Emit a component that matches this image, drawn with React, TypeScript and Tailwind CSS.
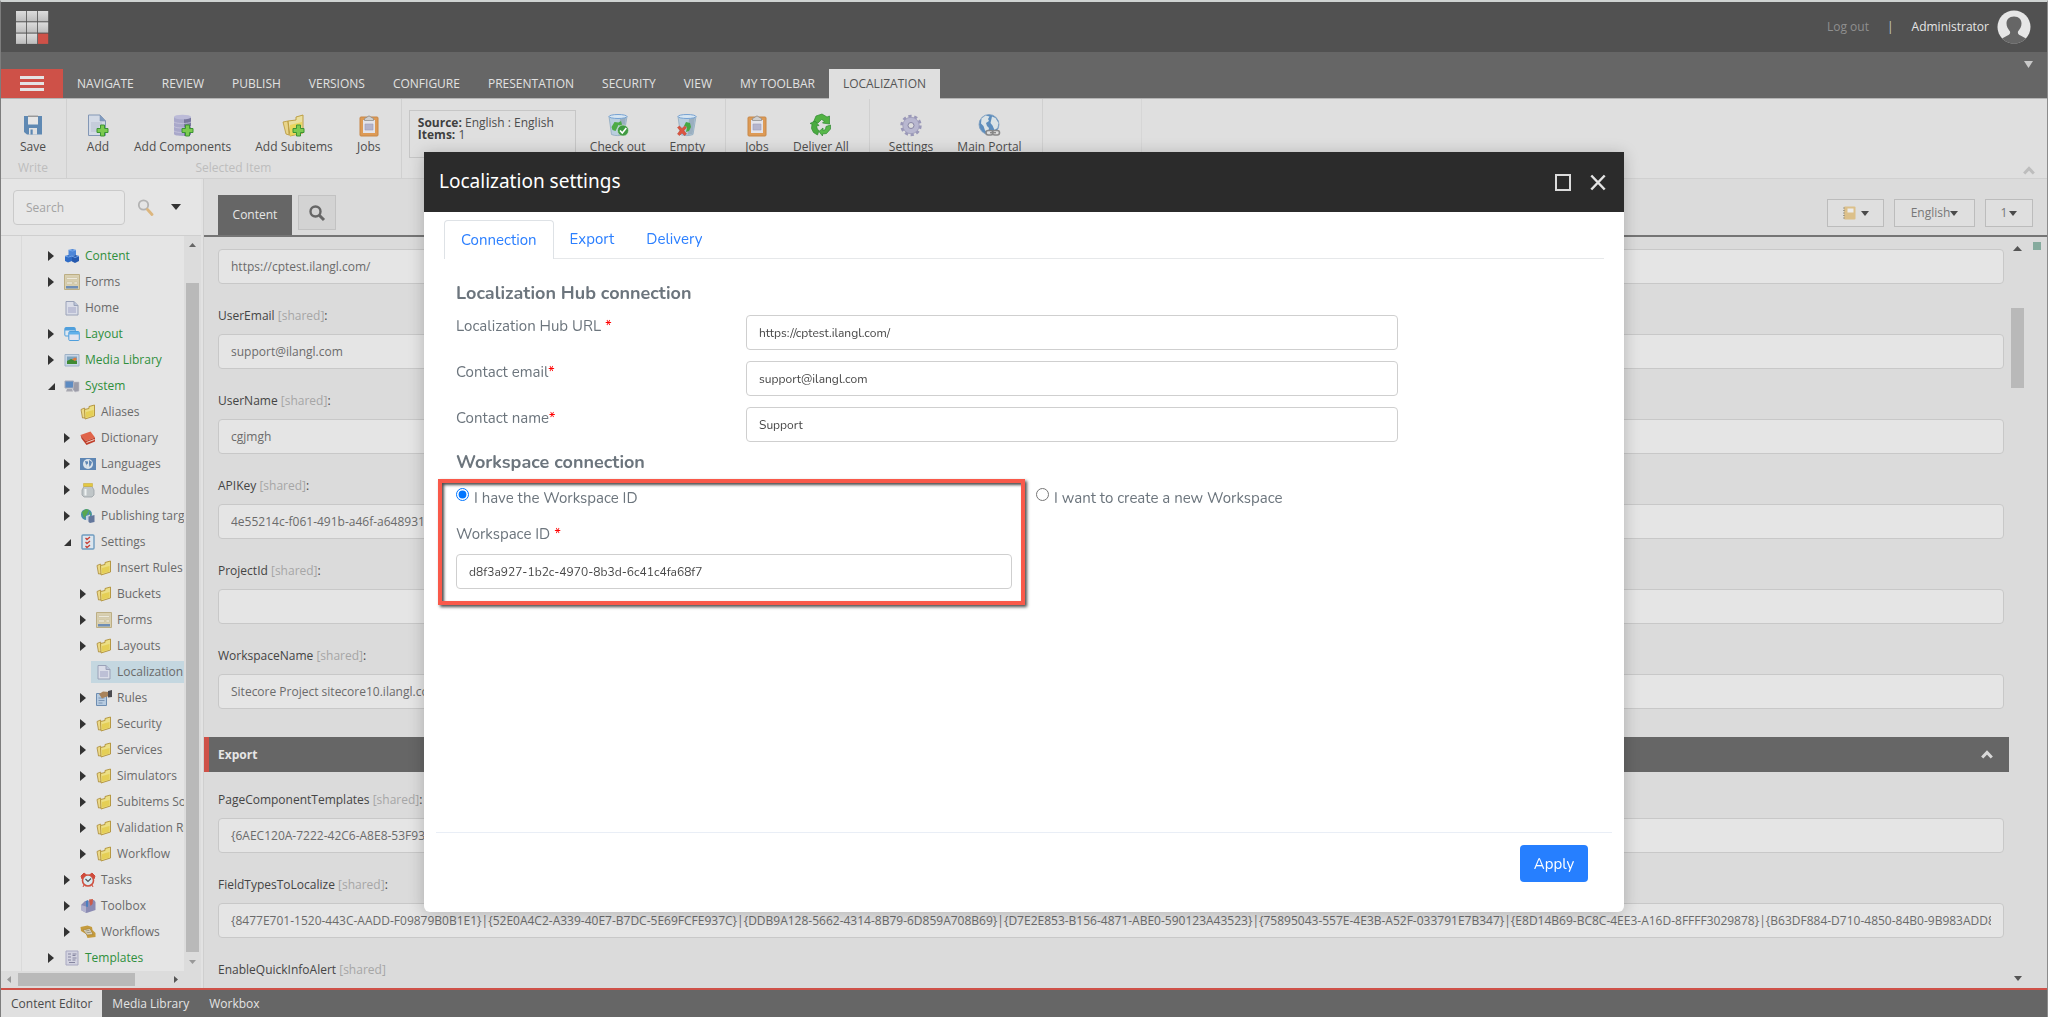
import { useId, useState } from 'react';
import type { ReactNode } from 'react';

/* ---------- icons ---------- */

function Svg({ children, box = 16, className = 'w-4 h-4' }: { children: ReactNode; box?: number; className?: string }) {
  return (
    <svg viewBox={`0 0 ${box} ${box}`} className={`${className} shrink-0`} fill="none" aria-hidden="true">
      {children}
    </svg>
  );
}

const Plus = () => (
  <path d="M14.500 12h4v3.500h3.500v4h-3.500v3.500h-4v-3.500h-3.500v-4h3.500z" fill="#7ccb4f" stroke="#3c9434" strokeWidth="1" />
);

const BigClipboard = () => (
  <Svg box={24} className="w-6 h-6">
    <rect x="3" y="4" width="18" height="19" rx="1" fill="#dd9a55" stroke="#c78748" />
    <path d="M6 7h12v13H6z" fill="#e3e3ea" />
    <path d="M8 11h8v6H8z" fill="#b4b4cc" stroke="#9d9db8" strokeWidth=".6" />
    <path d="M7.500 7.500V5.500l3-1.500a1.600 1.600 0 0 1 3 0l3 1.500v2z" fill="#cfcfcf" stroke="#8f8f8f" strokeWidth=".8" />
  </Svg>
);

const Bin = () => (
  <>
    <path d="M3 3.500 5.500 21.500c3 1.500 9.500 1.500 12.500 0L21 3.500z" fill="#b9cede" stroke="#8fa9bf" strokeWidth=".8" />
    <path d="M14 6l6-2-2.500 17-5 1z" fill="#8ea2b3" opacity=".7" />
    <ellipse cx="12" cy="3.500" rx="9" ry="2" fill="#d7e6f2" stroke="#6b9bd0" strokeWidth=".9" />
  </>
);

const bigIcons = {
  save: (
    <Svg box={24} className="w-6 h-6">
      <path d="M3 3h18v18.500H6L3 19z" fill="#5f89b3" />
      <path d="M7 3h10v8.500H7z" fill="#e6e6e6" />
      <path d="M7 3.200h10" stroke="#777" strokeWidth="1" />
      <path d="M8 15h8v6.500H8z" fill="#e1e1e1" />
      <path d="M9.500 16.500h2.200v5H9.500z" fill="#5f89b3" />
    </Svg>
  ),
  add: (
    <Svg box={24} className="w-6 h-6">
      <path d="M2.500 2h11.500l5.500 6v14.500h-17z" fill="#d3dae6" stroke="#8397b5" />
      <path d="M14 2v6h5.500z" fill="#7f9bc0" stroke="#8397b5" strokeWidth=".6" />
      <path d="M5 10h11M5 12h11M5 14h8M5 16h8M5 18h6" stroke="#b7bfd0" />
      <Plus />
    </Svg>
  ),
  components: (
    <Svg box={24} className="w-6 h-6">
      <path d="M3 4v17c0 2.500 17 2.500 17 0V4z" fill="#a9a8ca" />
      <path d="M13 5h7v16c0 1-3 2-7 2z" fill="#6d6c92" opacity=".8" />
      <ellipse cx="11.500" cy="4" rx="8.500" ry="2.300" fill="#bcbbd8" />
      <path d="M3 9c2 2 15 2 17 0M3 13.500c2 2 15 2 17 0M3 18c2 2 15 2 17 0" stroke="#c9c8dd" strokeWidth=".8" />
      <Plus />
    </Svg>
  ),
  subitems: (
    <Svg box={24} className="w-6 h-6">
      <path d="M1 9l5-1 1 14-3-1z" fill="#e8d48a" stroke="#b99838" strokeWidth=".8" />
      <path d="M6 8l8-1V4l7-2v18l-13 3z" fill="#eadf9f" stroke="#b99838" strokeWidth=".9" />
      <path d="M8 12l12-3-1 11-11 3z" fill="#e9d34c" opacity=".8" />
      <Plus />
    </Svg>
  ),
  jobs: <BigClipboard />,
  checkout: (
    <Svg box={24} className="w-6 h-6">
      <Bin />
      <path d="M5.500 14l3-5 4 .500 2.500-1.500 1.500 5-4-1-3 6-3-1z" fill="#4dab46" />
      <circle cx="17" cy="17.500" r="5.500" fill="#3f9a41" stroke="#d5e8d5" strokeWidth=".6" />
      <path d="M14 17.500l2.300 2.500 4-5" stroke="#fff" strokeWidth="1.600" />
    </Svg>
  ),
  empty: (
    <Svg box={24} className="w-6 h-6">
      <Bin />
      <path d="M9 13l2-4 4 1 1 4-2 4-3 1 1-5z" fill="#46a742" />
      <path d="M2.500 14.500l2-1.500 2.500 2.500 2.500-2.500 2 1.500-2.500 3 2.500 3.500-2 1.500-2.500-2.500-2.500 2.500-2-1.500 2.500-3.500z" fill="#dc5540" stroke="#b8402e" strokeWidth=".5" />
    </Svg>
  ),
  deliver: (
    <Svg box={24} className="w-6 h-6">
      <path d="M7 3l6-2 5 3 2.500-1v8l-7-1 2-2-3-1.500-3.500 3.500-4.500-1z" fill="#52b243" stroke="#2f8a30" strokeWidth=".7" />
      <path d="M21.500 12v4l-4 4.500-4 .500v2l-3.500-4.500 4-3.500v2.500l2.500-1 .5-3z" fill="#58b84a" stroke="#2f8a30" strokeWidth=".7" />
      <path d="M1 10.500l5-2.500 4 4.500-2.500.5 1 3.500 1.500 1-1.500 4.500-4-2.500-2-4 .5-4.500z" fill="#4aab40" stroke="#2f8a30" strokeWidth=".7" />
    </Svg>
  ),
  gear: (
    <Svg box={24} className="w-6 h-6">
      <circle cx="12" cy="12.500" r="9.200" stroke="#9a98b8" strokeWidth="3" strokeDasharray="3.200 2.580" />
      <circle cx="12" cy="12.500" r="8.200" fill="#b8b7d0" stroke="#9a98b8" strokeWidth=".8" />
      <circle cx="12" cy="12.500" r="3" fill="#dedede" stroke="#8785a4" />
    </Svg>
  ),
  portal: (
    <Svg box={24} className="w-6 h-6">
      <circle cx="12" cy="11.500" r="10" fill="#5d8dbd" stroke="#7f9fc0" strokeWidth=".8" />
      <path d="M4.500 5.500l4-3 4 1-1.500 2.500 1 2-3 2 1 3 2 2-1 4.500-3-2-1.500-4.500-2.500-2.500zM15 3.500l3.500 1.500 3 5-1 5-3 2-2-4.500-2-2.500z" fill="#dbe3e6" />
      <rect x="9" y="17.500" width="7" height="4.500" rx="2.200" stroke="#888" strokeWidth="1.600" fill="#dedede" />
      <rect x="15.500" y="17.500" width="7" height="4.500" rx="2.200" stroke="#888" strokeWidth="1.600" fill="#dedede" />
      <path d="M13 19.700h6" stroke="#888" strokeWidth="1.400" />
    </Svg>
  ),
};

const FolderIcon = (
  <Svg>
    <path d="M1 5.500l3.500-1.500 1.500 9.500-3.500.5z" fill="#ecd988" stroke="#a98a38" strokeWidth=".8" />
    <path d="M4.500 5.500l4.500-1V2.500l5.500-1.500v11L5 15z" fill="#ecdf85" stroke="#b09038" strokeWidth=".9" />
    <path d="M6 8l7.500-2v5.500L6 13.500z" fill="#e3cb4a" opacity=".8" />
  </Svg>
);
const FormIcon = (
  <Svg>
    <path d="M.5.5h15v15H.5z" fill="#d8cfb0" stroke="#bcae84" />
    <path d="M2.500 3.500h11v2h-11zM2.500 8h6v2h-6zM10 8h3.500v2H10z" fill="#ece9dc" stroke="#c4b994" strokeWidth=".5" />
    <path d="M2 12h12v2.500H2z" fill="#6f8eb5" />
  </Svg>
);
const DocIcon = (
  <Svg>
    <path d="M2 1.500h8l4 4v9.500H2z" fill="#dadde8" stroke="#9aa2b8" />
    <path d="M10 1.500v4h4" fill="#b9c3d9" stroke="#9aa2b8" />
    <path d="M4 8h8M4 10h8M4 12h8" stroke="#b4b6d0" strokeWidth="1.300" />
  </Svg>
);

const treeIcons: Record<string, ReactNode> = {
  folder: FolderIcon,
  form: FormIcon,
  doc: DocIcon,
  cubes: (
    <Svg>
      <path d="M4.500 2l4-1 3.500 1v5l-4 1.500-3.500-1.500z" fill="#4c86d8" />
      <path d="M1 8l3.500-1L8 8v5l-4 1.500L1 13z" fill="#2f6cc6" />
      <path d="M8 8.500l3.500-1.500L15 8v5l-4 2-3-1.500z" fill="#2559ae" />
      <path d="M4.500 2l4 1L12 2M1 8l3.500 1L8 8l3 1.500L15 8" stroke="#7fb0f0" strokeWidth=".8" />
    </Svg>
  ),
  windows: (
    <Svg>
      <rect x=".8" y="1.500" width="10.500" height="8.500" rx="1" fill="#dfe8f0" stroke="#4f9fdc" />
      <path d="M1 2h10v2.500H1z" fill="#4f9fdc" />
      <rect x="4.800" y="5.500" width="10.500" height="9" rx="1" fill="#e2e3ee" stroke="#4f9fdc" />
      <path d="M5 6h10v2.500H5z" fill="#62b0ea" />
    </Svg>
  ),
  media: (
    <Svg>
      <path d="M1 2.500h14v11.500H1z" fill="#c8d6e6" stroke="#9fb3c8" />
      <path d="M3 4.500h10v7.500H3z" fill="#7fa3bd" />
      <path d="M3 9l4-2 6 2v3H3z" fill="#3f8a33" />
      <path d="M8 7.500l3-2 2 1.500-2 2z" fill="#df7a3c" />
    </Svg>
  ),
  system: (
    <Svg>
      <path d="M1 3h8.500v7H1z" fill="#5d8bc2" stroke="#a5a9b8" />
      <path d="M3 11h5l1 2.500H2z" fill="#a7a7b0" />
      <path d="M10 4h5v9l-4 1-2-2.500z" fill="#9c9ca8" stroke="#c0c0c8" strokeWidth=".6" />
    </Svg>
  ),
  book: (
    <Svg>
      <path d="M.500 5l10-3.500 4.500 6L6 11z" fill="#e0644a" />
      <path d="M6 11l9-3.500v4L6.500 15 1.500 8.500.5 5z" fill="#bf3f2b" />
      <path d="M6.500 12.500l8-3" stroke="#f0d8cc" />
    </Svg>
  ),
  globeFlag: (
    <Svg>
      <path d="M0 2h16v12H0z" fill="#5e86b4" />
      <circle cx="8" cy="8" r="5" fill="#dbe3ea" />
      <path d="M5 5l3 .500v2L6 9l1 3M9 4l3 2-1 3-1.500 2L9 8z" fill="#5e86b4" />
    </Svg>
  ),
  jar: (
    <Svg>
      <path d="M4 4.500h8l2 3.500v5l-2 2H4l-2-2V8z" fill="#c0c6c8" stroke="#9aa1a5" strokeWidth=".8" />
      <path d="M5.500 7v6.500" stroke="#eef2f2" strokeWidth="2" />
      <path d="M3.500 1.500h9v3h-9z" fill="#e3c842" stroke="#c9ad3c" strokeWidth=".6" />
    </Svg>
  ),
  publish: (
    <Svg>
      <circle cx="6.500" cy="6.500" r="5.500" fill="#4a90a8" />
      <path d="M2 4l4-3 3 1-2 4-3 4zM9 3l2 3-2 2z" fill="#59a850" />
      <path d="M6 8l4-1.500V13l-4-1z" fill="#c6d3e4" />
      <path d="M8.500 8.500l6-1.500v7l-4.500 1-1.500-1z" fill="#63779c" />
    </Svg>
  ),
  checklist: (
    <Svg>
      <rect x="2" y="1" width="12" height="14" rx="1" fill="#dce6ee" stroke="#6f9cc0" strokeWidth="1.400" />
      <path d="M5.500 4l1.500 1.500L10 3M5.500 8l1.500 1.500L10 7M5.500 12l1.500 1.500 3-2.500" stroke="#c8443a" strokeWidth="1.300" />
    </Svg>
  ),
  rules: (
    <Svg>
      <path d="M.500 3.500h10v12H.5z" fill="#b7cbe0" stroke="#6d8db1" />
      <path d="M2.500 8h6M2.500 10.500h6M2.500 13h4" stroke="#7c96b5" />
      <path d="M3 4l4-2.500 6 .500v4L8 7.500l-2 1z" fill="#a9835a" />
      <path d="M12 1l4-1v7l-4 .5z" fill="#4b4b50" />
    </Svg>
  ),
  clock: (
    <Svg>
      <path d="M1 4l3-3 2.500 2L2 7zM15 4l-3-3-2.500 2L14 7zM3 15l1.500-3M13 15l-1.500-3" fill="#cf4b3c" stroke="#cf4b3c" />
      <circle cx="8" cy="8.500" r="5.500" fill="#d8ecf2" stroke="#cf5140" strokeWidth="1.600" />
      <path d="M5.500 7L8 9.500 11 6.500" stroke="#555" strokeWidth="1.200" />
    </Svg>
  ),
  toolbox: (
    <Svg>
      <path d="M1 7l4-4 9-1 1.500 2v8l-9 3L1 12z" fill="#8b8bb3" />
      <path d="M1 7l5 1.500V15l-5-3z" fill="#b3b3cf" />
      <path d="M6 3l2-1v7l-2-.5z" fill="#4a7fc0" />
      <path d="M9 1.500l4-.500-.500 5-2 2z" fill="#cc5a48" />
    </Svg>
  ),
  workflows: (
    <Svg>
      <path d="M.500 3l7-1.500L12 3l.5 3L15.500 9v4l-8 1-1.500-4-5-3z" fill="#c59b3d" />
      <path d="M3 6l7-1.500 3 6-6 .5z" fill="#d9d3c0" stroke="#a07c2e" strokeWidth=".6" />
      <path d="M5.500 7l4-.700M6.500 8.800l4.500-.600" stroke="#8f8a78" strokeWidth=".8" />
    </Svg>
  ),
  templates: (
    <Svg>
      <path d="M2 1h12v14H2z" fill="#d3d3e0" stroke="#a9a9c2" />
      <path d="M4 4h3M4 7h3M4 10h3M8.500 4h4M8.500 5.500h3M8.500 8h4M8.500 10h3M5 12.500h6" stroke="#85859f" strokeWidth="1.200" />
    </Svg>
  ),
};

function Caret({ className = 'w-2 h-[5px] text-[#4a4a4a]', up = false }: { className?: string; up?: boolean }) {
  return (
    <svg viewBox="0 0 10 6" className={`${className} shrink-0`} preserveAspectRatio="none" aria-hidden="true">
      <path d={up ? 'M0 6h10L5 0z' : 'M0 0h10L5 6z'} fill="currentColor" />
    </svg>
  );
}

function Chevron({ className }: { className: string }) {
  return (
    <svg viewBox="0 0 12 9" className={`w-3 h-[9px] ${className}`} fill="none" aria-hidden="true">
      <path d="M1.200 7.500L6 2.500l4.800 5" stroke="currentColor" strokeWidth="3" />
    </svg>
  );
}

/* ---------- data ---------- */

type Node = { label: string; level: number; icon: string; state?: 'open' | 'closed'; green?: boolean; selected?: boolean };

const nodes: Node[] = [
  { label: 'Content', level: 0, icon: 'cubes', state: 'closed', green: true },
  { label: 'Forms', level: 0, icon: 'form', state: 'closed' },
  { label: 'Home', level: 0, icon: 'doc' },
  { label: 'Layout', level: 0, icon: 'windows', state: 'closed', green: true },
  { label: 'Media Library', level: 0, icon: 'media', state: 'closed', green: true },
  { label: 'System', level: 0, icon: 'system', state: 'open', green: true },
  { label: 'Aliases', level: 1, icon: 'folder' },
  { label: 'Dictionary', level: 1, icon: 'book', state: 'closed' },
  { label: 'Languages', level: 1, icon: 'globeFlag', state: 'closed' },
  { label: 'Modules', level: 1, icon: 'jar', state: 'closed' },
  { label: 'Publishing targets', level: 1, icon: 'publish', state: 'closed' },
  { label: 'Settings', level: 1, icon: 'checklist', state: 'open' },
  { label: 'Insert Rules', level: 2, icon: 'folder' },
  { label: 'Buckets', level: 2, icon: 'folder', state: 'closed' },
  { label: 'Forms', level: 2, icon: 'form', state: 'closed' },
  { label: 'Layouts', level: 2, icon: 'folder', state: 'closed' },
  { label: 'Localization', level: 2, icon: 'doc', selected: true },
  { label: 'Rules', level: 2, icon: 'rules', state: 'closed' },
  { label: 'Security', level: 2, icon: 'folder', state: 'closed' },
  { label: 'Services', level: 2, icon: 'folder', state: 'closed' },
  { label: 'Simulators', level: 2, icon: 'folder', state: 'closed' },
  { label: 'Subitems Sorting', level: 2, icon: 'folder', state: 'closed' },
  { label: 'Validation Rules', level: 2, icon: 'folder', state: 'closed' },
  { label: 'Workflow', level: 2, icon: 'folder', state: 'closed' },
  { label: 'Tasks', level: 1, icon: 'clock', state: 'closed' },
  { label: 'Toolbox', level: 1, icon: 'toolbox', state: 'closed' },
  { label: 'Workflows', level: 1, icon: 'workflows', state: 'closed' },
  { label: 'Templates', level: 0, icon: 'templates', state: 'closed', green: true },
];

const levelPadding = ['pl-[21px]', 'pl-[37px]', 'pl-[53px]'];

const menu = ['NAVIGATE', 'REVIEW', 'PUBLISH', 'VERSIONS', 'CONFIGURE', 'PRESENTATION', 'SECURITY', 'VIEW', 'MY TOOLBAR'];

const connectionFields = [
  { label: 'UserEmail', value: 'support@ilangl.com' },
  { label: 'UserName', value: 'cgjmgh' },
  { label: 'APIKey', value: '4e55214c-f061-491b-a46f-a648931' },
  { label: 'ProjectId', value: '' },
  { label: 'WorkspaceName', value: 'Sitecore Project sitecore10.ilangl.com' },
];

const exportFields = [
  { label: 'PageComponentTemplates', value: '{6AEC120A-7222-42C6-A8E8-53F93' },
  {
    label: 'FieldTypesToLocalize',
    value:
      '{8477E701-1520-443C-AADD-F09879B0B1E1}|{52E0A4C2-A339-40E7-B7DC-5E69FCFE937C}|{DDB9A128-5662-4314-8B79-6D859A708B69}|{D7E2E853-B156-4871-ABE0-590123A43523}|{75895043-557E-4E3B-A52F-033791E7B347}|{E8D14B69-BC8C-4EE3-A16D-8FFFF3029878}|{B63DF884-D710-4850-84B0-9B983ADD8}',
  },
];

/* ---------- page parts ---------- */

function TopBar() {
  return (
    <header className="flex h-[50px] shrink-0 items-center justify-between bg-[#515151] pl-[14px] pr-4">
      <svg viewBox="0 0 34 34" className="h-[34px] w-[34px]" role="img" aria-label="Start">
        <defs>
          <linearGradient id="tile" x1="0" y1="0" x2="0" y2="1">
            <stop offset="0" stopColor="#dcdcdc" />
            <stop offset="1" stopColor="#bdbdbd" />
          </linearGradient>
        </defs>
        {[0, 1, 2].map((r) =>
          [0, 1, 2].map((c) => (
            <rect key={`${r}${c}`} x={1 + c * 11} y={1 + r * 11.300} width="10.200" height="10.300" fill={r === 2 && c === 2 ? '#ce5148' : 'url(#tile)'} />
          )),
        )}
      </svg>
      <div className="flex items-center">
        <a href="#logout" className="text-[#8f8f8f]">Log out</a>
        <span className="mx-[18px] text-[#c9c9c9]">|</span>
        <span className="text-[#e6e6e6]">Administrator</span>
        <svg viewBox="0 0 34 34" className="ml-2 h-[34px] w-[34px]" aria-hidden="true">
          <circle cx="17" cy="17" r="16.500" fill="#e6e6e6" />
          <path d="M17 6.500c-5 0-7.500 3-7.500 7 0 3 1.500 5.500 3.500 8 .500 2-.5 3-2.500 4L5 28.500A16.500 16.500 0 0 0 29 28.500l-5.500-3c-2-1-3-2-2.500-4 2-2.500 3.500-5 3.500-8 0-4-2.500-7-7.500-7z" fill="#666" />
        </svg>
      </div>
    </header>
  );
}

function MenuBar() {
  return (
    <nav className="flex h-[47px] shrink-0 items-end border-b border-[#b4b4b4] bg-[#666]">
      <button type="button" aria-label="Menu" className="flex h-[29px] w-[62px] flex-col items-center justify-center gap-[3px] bg-[#ce5148]">
        <span className="h-[3px] w-6 bg-[#e4e4e4]" />
        <span className="h-[3px] w-6 bg-[#e4e4e4]" />
        <span className="h-[3px] w-6 bg-[#e4e4e4]" />
      </button>
      {menu.map((m) => (
        <button key={m} type="button" className="h-7 px-[14px] text-[#e2e2e2]">{m}</button>
      ))}
      <button type="button" className="-mb-px h-[30px] bg-[#dfdfdf] px-[14px] text-[#555]">LOCALIZATION</button>
      <button type="button" aria-label="More tabs" className="ml-auto mr-[14px] flex h-full items-start pt-[9px]">
        <Caret className="h-[7px] w-[9px] text-[#c9c9c9]" />
      </button>
    </nav>
  );
}

function RibbonButton({ icon, label }: { icon: ReactNode; label: string }) {
  return (
    <button type="button" className="flex flex-col items-center gap-[2px] px-3 pt-[14px]">
      {icon}
      <span className="leading-4">{label}</span>
    </button>
  );
}

function RibbonGroup({ children, caption }: { children?: ReactNode; caption?: string }) {
  return (
    <section className="flex flex-col border-r border-[#d0d0d0] pl-[7px] pr-2">
      <div className="flex grow items-start">{children}</div>
      <div className="h-[18px] text-center leading-4 text-[#bdbdbd]">{caption}</div>
    </section>
  );
}

function Ribbon() {
  return (
    <div className="flex h-20 shrink-0 border-b border-[#d0d0d0] bg-[#dfdfdf] text-[#4d4d4d]">
      <RibbonGroup caption="Write">
        <RibbonButton icon={bigIcons.save} label="Save" />
      </RibbonGroup>
      <RibbonGroup caption="Selected Item">
        <RibbonButton icon={bigIcons.add} label="Add" />
        <RibbonButton icon={bigIcons.components} label="Add Components" />
        <RibbonButton icon={bigIcons.subitems} label="Add Subitems" />
        <RibbonButton icon={bigIcons.jobs} label="Jobs" />
      </RibbonGroup>
      <RibbonGroup>
        <div className="mr-[2px] mt-[11px] h-12 w-[167px] border border-[#c6c6c6] px-2 py-[6px] leading-3">
          <p><b className="text-[#3f3f3f]">Source:</b> English : English</p>
          <p><b className="text-[#3f3f3f]">Items:</b> 1</p>
        </div>
        <RibbonButton icon={bigIcons.checkout} label="Check out" />
        <RibbonButton icon={bigIcons.empty} label="Empty" />
      </RibbonGroup>
      <RibbonGroup>
        <RibbonButton icon={bigIcons.jobs} label="Jobs" />
        <RibbonButton icon={bigIcons.deliver} label="Deliver All" />
      </RibbonGroup>
      <RibbonGroup>
        <RibbonButton icon={bigIcons.gear} label="Settings" />
        <RibbonButton icon={bigIcons.portal} label="Main Portal" />
      </RibbonGroup>
      <div className="w-[99px] border-r border-[#d6d6d6]" />
      <button type="button" aria-label="Collapse ribbon" className="ml-auto mr-3 self-end pb-[3px]">
        <Chevron className="text-[#bdbdbd]" />
      </button>
    </div>
  );
}

function TreeRow({ node }: { node: Node }) {
  const tone = node.green ? 'text-[#2f8f3c]' : 'text-[#6a6a6a]';
  return (
    <li className={`flex h-[26px] items-center ${levelPadding[node.level]}`}>
      <span className="flex w-4 shrink-0 justify-center">
        {node.state === 'closed' && (
          <svg viewBox="0 0 6 10" className="h-[10px] w-[6px]" aria-hidden="true"><path d="M0 0l6 5-6 5z" fill="#333" /></svg>
        )}
        {node.state === 'open' && (
          <svg viewBox="0 0 7 7" className="h-[7px] w-[7px]" aria-hidden="true"><path d="M7 0v7H0z" fill="#333" /></svg>
        )}
      </span>
      <a href="#item" className={`flex h-[22px] grow items-center gap-[5px] whitespace-nowrap pl-[5px] ${tone} ${node.selected ? 'bg-[#c4d7e0]' : ''}`}>
        {treeIcons[node.icon]}
        {node.label}
      </a>
    </li>
  );
}

function Sidebar() {
  return (
    <aside className="flex w-[200px] shrink-0 flex-col overflow-hidden bg-[#e5e5e5]">
      <div className="flex h-[57px] shrink-0 items-center border-b border-[#cfcfcf] pl-3">
        <input
          type="text"
          placeholder="Search"
          aria-label="Search"
          className="h-[35px] w-[112px] rounded-sm border border-[#cacaca] bg-[#e8e8e8] px-3 placeholder:text-[#a3a3a3]"
        />
        <button type="button" aria-label="Run search" className="ml-3">
          <svg viewBox="0 0 17 17" className="h-[17px] w-[17px]" fill="none" aria-hidden="true">
            <circle cx="6.500" cy="6" r="4.700" stroke="#b3b3b3" strokeWidth="1.800" />
            <path d="M10.500 10.500l4.500 5" stroke="#dcb67e" strokeWidth="2.800" strokeLinecap="round" />
          </svg>
        </button>
        <button type="button" aria-label="Search options" className="ml-[17px]">
          <Caret className="h-[6px] w-[10px] text-[#333]" />
        </button>
      </div>
      <div className="flex min-h-0 grow">
        <div className="w-[21px] shrink-0 border-r border-[#dadada]" />
        <ul className="min-w-0 grow overflow-hidden pt-[7px]">
          {nodes.map((n, i) => (
            <TreeRow key={i} node={n} />
          ))}
        </ul>
        <div className="flex w-[17px] shrink-0 flex-col items-center bg-[#dcdcdc] py-[7px]">
          <Caret up className="h-1 w-[7px] text-[#666]" />
          <div className="mb-2 mt-9 w-[13px] grow bg-[#b9b9b9]" />
          <Caret className="h-1 w-[7px] text-[#999]" />
        </div>
      </div>
      <div className="flex h-[17px] shrink-0 items-center bg-[#dcdcdc]">
        <svg viewBox="0 0 4 7" className="ml-[6px] h-[7px] w-1" aria-hidden="true"><path d="M4 0v7L0 3.500z" fill="#999" /></svg>
        <div className="ml-[7px] h-[13px] w-[117px] bg-[#b9b9b9]" />
        <svg viewBox="0 0 4 7" className="ml-auto mr-[23px] h-[7px] w-1" aria-hidden="true"><path d="M0 0v7l4-3.500z" fill="#555" /></svg>
      </div>
    </aside>
  );
}

const fieldBox = 'h-[35px] w-full rounded-sm border border-[#c8c8c8] bg-[#e5e5e5] px-3 text-[#6b6b6b]';

function ItemField({ label, value, colon = true }: { label: string; value: string; colon?: boolean }) {
  const id = useId();
  return (
    <div className="mt-[22px]">
      <label htmlFor={id} className="mb-2 block leading-5 text-[#444]">
        {label} <span className="text-[#a6a6a6]">[shared]</span>{colon ? ':' : ''}
      </label>
      <input id={id} type="text" defaultValue={value} className={`${fieldBox} block`} />
    </div>
  );
}

const dropButton = 'flex h-7 items-center justify-center border border-[#bcbcbc] bg-[#dfdfdf] text-[#777]';

function Editor() {
  return (
    <main className="flex min-w-0 grow flex-col border-l border-[#cfcfcf] bg-[#dbdbdb]">
      <div className="flex h-[58px] shrink-0 items-start border-b-2 border-[#757575] px-[14px]">
        <button type="button" className="mt-4 h-10 w-[74px] bg-[#666] text-[#e6e6e6]">Content</button>
        <button type="button" aria-label="Search tab" className="ml-[6px] mt-4 flex h-[35px] w-[38px] items-center justify-center border border-[#c2c2c2] bg-[#d3d3d3]">
          <svg viewBox="0 0 18 18" className="h-[18px] w-[18px]" fill="none" aria-hidden="true">
            <circle cx="7.500" cy="7.500" r="5" stroke="#666" strokeWidth="2.400" />
            <path d="M11.500 11.500l4.500 4.500" stroke="#666" strokeWidth="3" />
          </svg>
        </button>
        <div className="ml-auto mt-5 flex gap-[10px]">
          <button type="button" aria-label="Item versions" className={`${dropButton} w-[57px] gap-[5px]`}>
            <Svg box={14} className="h-[14px] w-[14px]">
              <rect x="2" y=".5" width="11.500" height="13" rx="1" fill="#dcc08a" />
              <path d="M5.500 2.500h6v4h-6z" fill="#ececec" />
              <path d="M1 2h2M1 4.500h2M1 7h2M1 9.500h2M1 12h2" stroke="#a09a8a" />
            </Svg>
            <Caret />
          </button>
          <button type="button" className={`${dropButton} w-[81px]`}>English<Caret /></button>
          <button type="button" className={`${dropButton} w-12 gap-[2px]`}>1<Caret /></button>
        </div>
      </div>
      <div className="flex min-h-0 grow">
        <div className="min-w-0 grow overflow-hidden">
          <div className="pl-[14px] pr-[5px] pt-3">
            <input type="text" aria-label="Url" defaultValue="https://cptest.ilangl.com/" className={`${fieldBox} block`} />
            {connectionFields.map((f) => (
              <ItemField key={f.label} {...f} />
            ))}
          </div>
          <div className="mt-7 flex h-[35px] items-center justify-between border-l-[5px] border-[#ce5148] bg-[#666] pl-[9px] pr-4">
            <h2 className="font-bold text-[#e6e6e6]">Export</h2>
            <button type="button" aria-label="Collapse Export"><Chevron className="text-[#d9d9d9]" /></button>
          </div>
          <div className="-mt-1 flow-root pl-[14px] pr-[5px]">
            {exportFields.map((f) => (
              <ItemField key={f.label} {...f} />
            ))}
            <ItemField label="EnableQuickInfoAlert" value="" colon={false} />
          </div>
        </div>
        <div className="flex w-[17px] shrink-0 flex-col items-center pb-[7px] pt-[9px]">
          <Caret up className="h-[5px] w-[9px] text-[#555]" />
          <div className="mb-auto mt-[57px] h-20 w-[13px] bg-[#b9b9b9]" />
          <Caret className="h-[5px] w-[8px] text-[#555]" />
        </div>
        <div className="w-[21px] shrink-0 pl-[7px] pt-[5px]">
          <div className="h-2 w-2 bg-[#86ab9e]" />
        </div>
      </div>
    </main>
  );
}

/* ---------- dialog ---------- */

const modalInput = 'h-[35px] w-full rounded-sm border border-[#cfcfcf] bg-white px-3 text-xs text-[#474747]';

const Star = () => <span className="text-[#f00]">*</span>;

function DialogField({ label, value, spaced }: { label: string; value: string; spaced?: boolean }) {
  const id = useId();
  return (
    <div className="flex items-start">
      <label htmlFor={id} className="w-[290px] shrink-0 leading-[22px]">
        {label}{spaced ? ' ' : ''}<Star />
      </label>
      <div className="max-w-[652px] grow">
        <input id={id} type="text" defaultValue={value} className={`${modalInput} block`} />
      </div>
    </div>
  );
}

function SettingsDialog() {
  const [mode, setMode] = useState<'have' | 'create'>('have');
  return (
    <div
      role="dialog"
      aria-labelledby="dialog-title"
      className="fixed left-1/2 top-[152px] flex h-[760px] w-[1200px] max-w-full -translate-x-1/2 flex-col rounded-b-md bg-white font-['Nunito','Lato',sans-serif] text-[15px] text-[#6c757d] shadow-[0_2px_16px_rgba(0,0,0,0.22)]"
    >
      <header className="flex h-[60px] shrink-0 items-center bg-[#2b2b2b] pl-[15px] pr-[18px]">
        <h1 id="dialog-title" className="font-['Noto_Sans',sans-serif] text-[19px] text-white">Localization settings</h1>
        <button type="button" aria-label="Maximize" className="ml-auto">
          <svg viewBox="0 0 16 17" className="h-[17px] w-4" aria-hidden="true">
            <rect x="1" y="1" width="14" height="15" fill="none" stroke="#dcdcdc" strokeWidth="2" />
          </svg>
        </button>
        <button type="button" aria-label="Close" className="ml-[19px]">
          <svg viewBox="0 0 16 17" className="h-[17px] w-4" aria-hidden="true">
            <path d="M1.300 1.500l13.400 14M14.700 1.500l-13.400 14" stroke="#e4e4e4" strokeWidth="2.500" />
          </svg>
        </button>
      </header>

      <div role="tablist" className="mx-5 mt-2 flex h-[39px] shrink-0 border-b border-[#e6e8ea] text-[#2b7fff]">
        <button type="button" role="tab" aria-selected="true" className="-mb-px rounded-t border border-b-0 border-[#dee2e6] bg-white px-4">Connection</button>
        <button type="button" role="tab" aria-selected="false" className="px-4">Export</button>
        <button type="button" role="tab" aria-selected="false" className="px-4">Delivery</button>
      </div>

      <form className="grow px-8 pt-[22px]" onSubmit={(e) => e.preventDefault()}>
        <h2 className="mb-[10px] text-lg font-bold leading-6">Localization Hub connection</h2>
        <div className="flex flex-col gap-[11px]">
          <DialogField label="Localization Hub URL" value="https://cptest.ilangl.com/" spaced />
          <DialogField label="Contact email" value="support@ilangl.com" />
          <DialogField label="Contact name" value="Support" />
        </div>
        <h2 className="mb-3 mt-2 text-lg font-bold leading-6">Workspace connection</h2>
        <div className="grid grid-cols-2 gap-6">
          <div className="relative">
            <label className="flex items-start gap-[5px] leading-6">
              <input type="radio" name="workspace" className="mt-[2px] h-[13px] w-[13px]" checked={mode === 'have'} onChange={() => setMode('have')} />
              I have the Workspace ID
            </label>
            <label htmlFor="workspace-id" className="mt-3 block leading-6">Workspace ID <Star /></label>
            <input id="workspace-id" type="text" defaultValue="d8f3a927-1b2c-4970-8b3d-6c41c4fa68f7" className={`${modalInput} mt-2 block`} />
            <div className="pointer-events-none absolute -bottom-4 -left-[18px] -right-[13px] -top-[7px] border-4 border-[#f9594a] shadow-[2px_2px_3px_rgba(0,0,0,0.7),inset_2px_2px_3px_rgba(0,0,0,0.7)]" />
          </div>
          <label className="flex items-start gap-[5px] leading-6">
            <input type="radio" name="workspace" className="mt-[2px] h-[13px] w-[13px]" checked={mode === 'create'} onChange={() => setMode('create')} />
            I want to create a new Workspace
          </label>
        </div>
      </form>

      <footer className="mx-3 flex h-20 shrink-0 items-start justify-end border-t border-[#e9eef6] pr-6 pt-3">
        <button type="button" className="h-[37px] w-[68px] rounded-sm bg-[#267fff] text-white">Apply</button>
      </footer>
    </div>
  );
}

export default function App() {
  return (
    <div className="flex h-screen flex-col overflow-hidden border-l border-r border-t-2 border-l-[#7d7d7d] border-r-[#8c8c8c] border-t-[#cfd3d2] font-['Open_Sans',sans-serif] text-xs">
      <TopBar />
      <MenuBar />
      <Ribbon />
      <div className="flex min-h-0 grow gap-[2px] bg-[#e2e2e2]">
        <Sidebar />
        <Editor />
      </div>
      <nav className="flex h-[29px] shrink-0 border-t-2 border-[#ce5148] bg-[#666] text-[#e4e4e4]">
        <button type="button" className="bg-[#e0e0e0] px-[10px] text-[#4a4a4a]">Content Editor</button>
        <button type="button" className="px-[10px]">Media Library</button>
        <button type="button" className="px-[10px]">Workbox</button>
      </nav>
      <SettingsDialog />
    </div>
  );
}
